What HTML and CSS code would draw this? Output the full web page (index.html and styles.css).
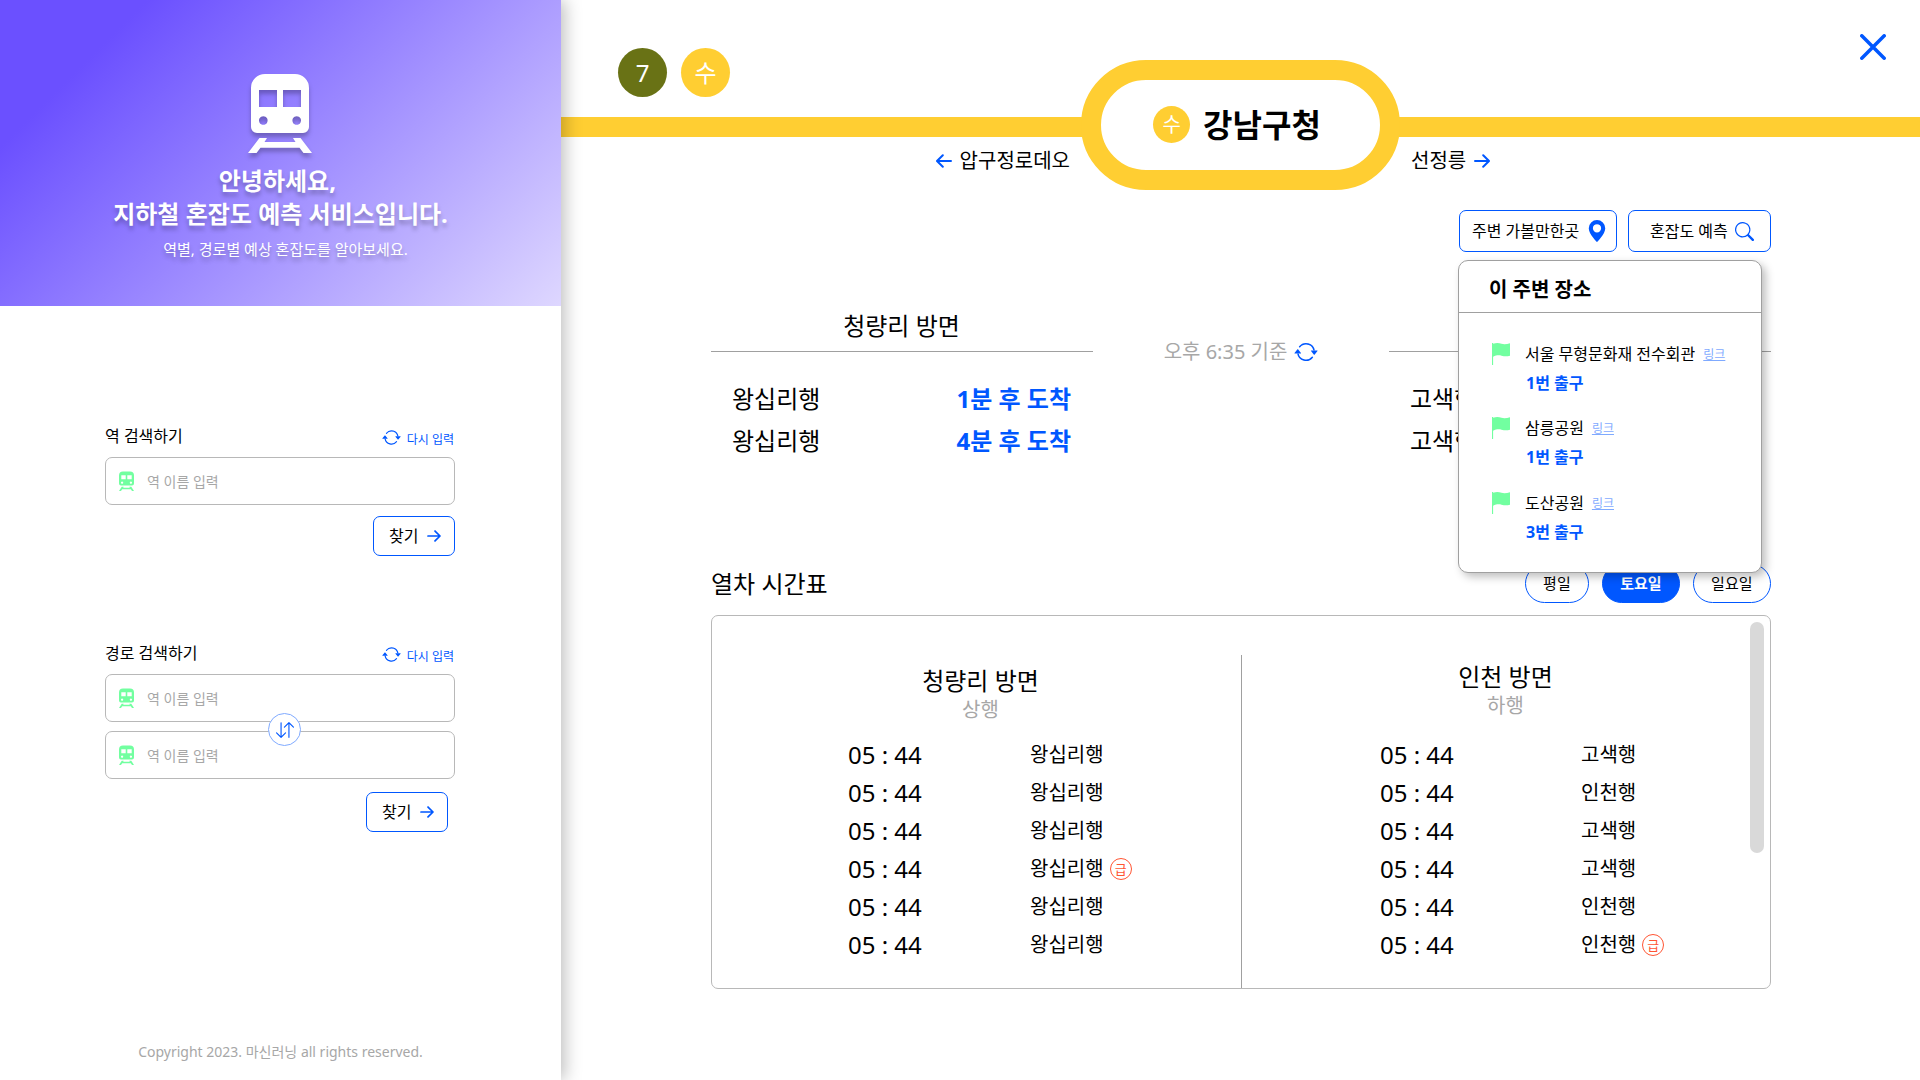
FILE: index.html
```html
<!DOCTYPE html>
<html lang="ko">
<head>
<meta charset="utf-8">
<title>지하철 혼잡도 예측 서비스</title>
<link rel="stylesheet" href="styles.css">
</head>
<body>
<svg class="sprite" aria-hidden="true">
  <symbol id="refresh" viewBox="0 0 16 16"><path d="M11.534 7h3.932a.25.25 0 0 1 .192.41l-1.966 2.36a.25.25 0 0 1-.384 0l-1.966-2.36a.25.25 0 0 1 .192-.41m-11 2h3.932a.25.25 0 0 0 .192-.41L2.692 6.23a.25.25 0 0 0-.384 0L.342 8.59A.25.25 0 0 0 .534 9"/><path d="M8 3c-1.552 0-2.94.707-3.857 1.818a.5.5 0 1 1-.771-.636A6.002 6.002 0 0 1 13.917 7H12.9A5 5 0 0 0 8 3M3.1 9a5.002 5.002 0 0 0 8.757 2.182.5.5 0 1 1 .771.636A6.002 6.002 0 0 1 2.083 9z"/></symbol>
  <symbol id="swap" viewBox="0 0 16 16"><path d="M11.5 15a.5.5 0 0 0 .5-.5V2.707l3.146 3.147a.5.5 0 0 0 .708-.708l-4-4a.5.5 0 0 0-.708 0l-4 4a.5.5 0 1 0 .708.708L11 2.707V14.5a.5.5 0 0 0 .5.5m-7-14a.5.5 0 0 1 .5.5v11.793l3.146-3.147a.5.5 0 0 1 .708.708l-4 4a.5.5 0 0 1-.708 0l-4-4a.5.5 0 0 1 .708-.708L4 13.293V1.5a.5.5 0 0 1 .5-.5"/></symbol>
  <symbol id="search" viewBox="0 0 16 16"><path d="M11.742 10.344a6.5 6.5 0 1 0-1.397 1.398h-.001q.044.06.098.115l3.85 3.85a1 1 0 0 0 1.415-1.414l-3.85-3.85a1 1 0 0 0-.115-.1zM12 6.5a5.5 5.5 0 1 1-11 0 5.5 5.5 0 0 1 11 0"/></symbol>
  <symbol id="pin" viewBox="0 0 16 16"><path d="M8 16s6-5.686 6-10A6 6 0 0 0 2 6c0 4.314 6 10 6 10m0-7a3 3 0 1 1 0-6 3 3 0 0 1 0 6"/></symbol>
  <symbol id="flag" viewBox="0 0 18 22"><path d="M0 0h1.1v.7C4.500-.2 7 0 9.500.8 12.500 1.700 15 1 18 .3V12.700C15 13.600 12.500 13.500 9.500 12.700 6.500 12 4 12.400 1.100 13.800V22H0z"/></symbol>
  <symbol id="arrow" viewBox="0 0 16 14"><path d="M1 7h13.500M9.200 1.200 15 7l-5.800 5.800" fill="none" stroke="currentColor" stroke-width="2" stroke-linecap="round" stroke-linejoin="round"/></symbol>
  <symbol id="train" viewBox="0 0 15 21"><path fill-rule="evenodd" d="M4 .5h7a4 4 0 0 1 4 4v8a2 2 0 0 1-2 2H2a2 2 0 0 1-2-2v-8a4 4 0 0 1 4-4zM2.300 4.300v4h4.400v-4zm6 0v4h4.400v-4zM3.100 10.500a1.100 1.100 0 1 0 .01 0zm8.800 0a1.100 1.100 0 1 0 .01 0z"/><path d="M2.700 15.800h2l-.5 1h6.600l-.5-1h2L15 20h-2l-1.200-1.700H3.200L2 20H0z"/></symbol>
</svg>

<div class="app">
  <aside class="sidebar">
    <section class="hero">
      <svg class="hero-train" width="64" height="80" viewBox="0 0 64 80"><path fill-rule="evenodd" d="M17 1h30a14 14 0 0 1 14 14v39a6 6 0 0 1-6 6H9a6 6 0 0 1-6-6V15A14 14 0 0 1 17 1zM11 17v17h18V17zm24 0v17h18V17zM15.300 43.200a4.300 4.300 0 1 0 .01 0zm33.400 0a4.300 4.300 0 1 0 .01 0z"/><path d="M11.500 65h7.500l-2.500 4h31l-2.500-4h7.500L64 80h-8.500l-4-5.300h-39l-4 5.300H0z"/></svg>
      <h1>안녕하세요,&nbsp;<br>지하철 혼잡도 예측 서비스입니다.</h1>
      <p>역별, 경로별 예상 혼잡도를 알아보세요.</p>
    </section>

    <section class="search station-search">
      <div class="search-head"><h2>역 검색하기</h2><a class="reset"><svg width="19" height="19"><use href="#refresh"/></svg><span>다시 입력</span></a></div>
      <div class="field"><svg width="15" height="21"><use href="#train"/></svg><span>역 이름 입력</span></div>
      <a class="find">찾기<svg width="14" height="12"><use href="#arrow"/></svg></a>
    </section>

    <section class="search route-search">
      <div class="search-head"><h2>경로 검색하기</h2><a class="reset"><svg width="19" height="19"><use href="#refresh"/></svg><span>다시 입력</span></a></div>
      <div class="fields">
        <div class="field"><svg width="15" height="21"><use href="#train"/></svg><span>역 이름 입력</span></div>
        <div class="field"><svg width="15" height="21"><use href="#train"/></svg><span>역 이름 입력</span></div>
        <span class="swap"><svg width="18" height="18"><use href="#swap"/></svg></span>
      </div>
      <a class="find">찾기<svg width="14" height="12"><use href="#arrow"/></svg></a>
    </section>

    <footer>Copyright 2023. 마신러닝 all rights reserved.</footer>
  </aside>

  <main class="main">
    <header class="top">
      <div class="lines"><span class="line line-7">7</span><span class="line">수</span></div>
      <svg class="close" width="26" height="26" viewBox="0 0 26 26"><path d="M1.800 1.800l22.400 22.400M24.200 1.800 1.800 24.200"/></svg>
    </header>
    <div class="track"><div class="station"><span>수</span><h2>강남구청</h2></div></div>
    <nav class="neighbors">
      <a class="prev"><svg width="16" height="14"><use href="#arrow"/></svg>압구정로데오</a>
      <a class="next">선정릉<svg width="16" height="14"><use href="#arrow"/></svg></a>
    </nav>

    <div class="content">
      <div class="actions">
        <div class="places">
          <a class="action action-places">주변 가볼만한곳<svg width="22" height="22"><use href="#pin"/></svg></a>
          <div class="popup">
            <h3>이 주변 장소</h3>
            <ul>
              <li><svg width="18" height="22"><use href="#flag"/></svg><div><p>서울 무형문화재 전수회관<a>링크</a></p><b>1번 출구</b></div></li>
              <li><svg width="18" height="22"><use href="#flag"/></svg><div><p>삼릉공원<a>링크</a></p><b>1번 출구</b></div></li>
              <li><svg width="18" height="22"><use href="#flag"/></svg><div><p>도산공원<a>링크</a></p><b>3번 출구</b></div></li>
            </ul>
          </div>
        </div>
        <a class="action action-forecast">혼잡도 예측<svg width="19" height="19"><use href="#search"/></svg></a>
      </div>

      <section class="arrivals">
        <div class="direction">
          <h3>청량리 방면</h3>
          <p>왕십리행<b>1분 후 도착</b></p>
          <p>왕십리행<b>4분 후 도착</b></p>
        </div>
        <div class="asof">오후 6:35 기준<svg width="24" height="24"><use href="#refresh"/></svg></div>
        <div class="direction">
          <h3>인천 방면</h3>
          <p>고색행<b>1분 후 도착</b></p>
          <p>고색행<b>4분 후 도착</b></p>
        </div>
      </section>

      <div class="table-head">
        <h2>열차 시간표</h2>
        <div class="tabs"><a>평일</a><a class="active">토요일</a><a>일요일</a></div>
      </div>
      <section class="timetable">
        <div class="up">
          <h3>청량리 방면</h3><h4>상행</h4>
          <dl>
            <dt>05 : 44</dt><dd>왕십리행</dd>
            <dt>05 : 44</dt><dd>왕십리행</dd>
            <dt>05 : 44</dt><dd>왕십리행</dd>
            <dt>05 : 44</dt><dd>왕십리행<i>급</i></dd>
            <dt>05 : 44</dt><dd>왕십리행</dd>
            <dt>05 : 44</dt><dd>왕십리행</dd>
          </dl>
        </div>
        <div class="down">
          <h3>인천 방면</h3><h4>하행</h4>
          <dl>
            <dt>05 : 44</dt><dd>고색행</dd>
            <dt>05 : 44</dt><dd>인천행</dd>
            <dt>05 : 44</dt><dd>고색행</dd>
            <dt>05 : 44</dt><dd>고색행</dd>
            <dt>05 : 44</dt><dd>인천행</dd>
            <dt>05 : 44</dt><dd>인천행<i>급</i></dd>
          </dl>
        </div>
        <span class="scrollbar"></span>
      </section>
    </div>
  </main>
</div>
</body>
</html>
```
FILE: styles.css
```css
:root {
  --blue: #0057ff;
  --yellow: #ffce32;
  --gray: #a7a7a7;
  --green: #72ffa0;
}

* { box-sizing: border-box; margin: 0; padding: 0; }

body {
  font-family: "Noto Sans", "Noto Sans CJK KR", sans-serif;
  font-size: 16px;
  line-height: 24px;
  color: #000;
  background: #fff;
}

h1, h2, h3, h4 { font-weight: 400; }
svg { flex: none; display: block; fill: currentColor; }
.sprite { position: absolute; width: 0; height: 0; }
ul { list-style: none; }

.app { display: flex; height: 1080px; overflow: hidden; }

/* Sidebar */
.sidebar {
  position: relative;
  z-index: 1;
  flex: none;
  width: 561px;
  height: 1080px;
  display: flex;
  flex-direction: column;
  background: #fff;
  box-shadow: 4px 0 16px rgba(0, 0, 0, .25);
}
.hero {
  height: 306px;
  padding-top: 73px;
  display: flex;
  flex-direction: column;
  align-items: center;
  color: #fff;
  text-align: center;
  background: linear-gradient(135deg, #6b50ff 17%, #ded7ff 100%);
}
.hero-train { margin-right: 1px; filter: drop-shadow(0 4px 2px rgba(0, 0, 0, .25)); }
.hero h1 {
  margin-top: 11px;
  font-size: 24px;
  font-weight: 700;
  line-height: 33px;
  text-shadow: 0 4px 4px rgba(0, 0, 0, .25);
}
.hero p {
  margin: 9px 0 0 10px;
  font-size: 15px;
  line-height: 20px;
  text-shadow: 0 4px 4px rgba(0, 0, 0, .25);
}

.search { width: 350px; margin-left: 105px; display: flex; flex-direction: column; }
.station-search { margin-top: 118px; }
.route-search { margin-top: 85px; }
.search-head { display: flex; justify-content: space-between; height: 33px; }
.search-head h2 { font-size: 16px; }
.reset {
  display: flex;
  align-items: center;
  gap: 6px;
  height: 28px;
  padding-right: 1px;
  font-size: 12px;
  color: var(--blue);
}
.reset span { padding-top: 3px; }
.reset svg { margin-top: -1px; }
.field {
  height: 48px;
  padding-left: 13px;
  display: flex;
  align-items: center;
  gap: 13px;
  border: 1px solid #b8b8b8;
  border-radius: 7px;
  font-size: 14px;
  color: var(--gray);
}
.field span { padding-top: 1px; }
.field svg { color: var(--green); }
.fields { position: relative; display: flex; flex-direction: column; gap: 9px; }
.swap {
  position: absolute;
  left: 163px;
  top: 39px;
  width: 33px;
  height: 33px;
  display: flex;
  align-items: center;
  justify-content: center;
  border: 1px solid #7faaff;
  border-radius: 50%;
  background: #fff;
  color: var(--blue);
}
.find {
  align-self: flex-end;
  width: 82px;
  height: 40px;
  margin-top: 11px;
  padding-left: 15px;
  display: flex;
  align-items: center;
  gap: 8.500px;
  border: 1px solid var(--blue);
  border-radius: 7px;
}
.find svg { color: var(--blue); }
.route-search .find { margin: 13px 7px 0 0; }
footer {
  margin-top: auto;
  padding-bottom: 16px;
  font-size: 14px;
  text-align: center;
  color: var(--gray);
}

/* Station header */
.main { flex: 1; display: flex; flex-direction: column; }
.top {
  height: 117px;
  padding: 34px 34px 0 57px;
  display: flex;
  justify-content: space-between;
}
.lines { display: flex; gap: 14px; padding-top: 14px; }
.line {
  width: 49px;
  height: 49px;
  border-radius: 50%;
  font-size: 24px;
  line-height: 49px;
  text-align: center;
  color: #fff;
  background: var(--yellow);
}
.line-7 { background: #697215; }
.close { fill: none; stroke: var(--blue); stroke-width: 3.5; stroke-linecap: round; }
.track {
  height: 20px;
  display: flex;
  align-items: center;
  justify-content: center;
  background: var(--yellow);
}
.station {
  flex: none;
  width: 319px;
  height: 130px;
  margin-top: -4px;
  display: flex;
  align-items: center;
  justify-content: center;
  gap: 13px;
  border: 20px solid var(--yellow);
  border-radius: 65px;
  background: #fff;
}
.station span {
  width: 37px;
  height: 37px;
  margin: -1px 0 0 -7px;
  border-radius: 50%;
  font-size: 20px;
  line-height: 37px;
  text-align: center;
  color: #fff;
  background: var(--yellow);
}
.station h2 { font-size: 32px; font-weight: 700; line-height: 44px; }
.neighbors {
  height: 48px;
  display: grid;
  grid-template-columns: 1fr 341px 1fr;
  align-items: center;
  font-size: 20px;
}
.neighbors a { display: flex; align-items: center; gap: 8px; }
.neighbors svg { color: var(--blue); }
.prev { justify-content: flex-end; }
.prev svg { transform: scaleX(-1); }
.next { grid-column: 3; }

.content { width: 1060px; margin: 25px 0 0 150px; }
.actions { display: flex; justify-content: flex-end; gap: 11px; }
.action {
  height: 42px;
  display: flex;
  align-items: center;
  border: 1px solid var(--blue);
  border-radius: 7px;
}
.action svg { color: var(--blue); }
.action-places { width: 158px; padding-left: 12px; gap: 7px; }
.action-forecast { width: 143px; padding-left: 21px; gap: 7px; }
.places { position: relative; }
.popup {
  position: absolute;
  z-index: 2;
  top: 50px;
  left: -1px;
  width: 304px;
  height: 313px;
  border: 1px solid #a0a0a0;
  border-radius: 10px;
  background: #fff;
  box-shadow: 4px 4px 8px rgba(0, 0, 0, .25);
}
.popup h3 {
  height: 52px;
  padding-left: 30px;
  border-bottom: 1px solid #a0a0a0;
  font-size: 20px;
  font-weight: 700;
  line-height: 57px;
}
.popup ul { padding: 30px 0 0 33px; }
.popup li { display: flex; gap: 15px; height: 75px; }
.popup li:first-child { height: 74px; }
.popup li svg { color: var(--green); }
.popup li p { display: flex; margin-top: -1px; }
.popup li a {
  margin-left: 8px;
  font-size: 12px;
  line-height: 26px;
  color: #7faaff;
  text-decoration: underline;
}
.popup li b { display: block; padding-left: 1px; line-height: 30px; color: var(--blue); }

/* Live arrivals */
.arrivals { margin-top: 54px; display: grid; grid-template-columns: 382px 1fr 382px; }
.direction { font-size: 24px; }
.direction h3 {
  height: 46px;
  margin-bottom: 26px;
  padding-right: 1px;
  border-bottom: 1px solid #a0a0a0;
  font-size: 24px;
  line-height: 40px;
  text-align: center;
}
.direction p {
  display: flex;
  justify-content: space-between;
  padding: 0 22px 0 21px;
  line-height: 42px;
}
.direction b { color: var(--blue); }
.asof {
  padding-top: 32px;
  height: 60px;
  display: flex;
  align-items: center;
  justify-content: center;
  gap: 7px;
  font-size: 20px;
  color: var(--gray);
}
.asof svg { color: var(--blue); }

/* Timetable */
.table-head {
  margin-top: 102px;
  height: 39px;
  display: flex;
  align-items: center;
  justify-content: space-between;
}
.table-head h2 { font-size: 24px; }
.tabs { display: flex; gap: 13px; }
.tabs a {
  height: 39px;
  padding: 0 17.500px 0 17px;
  border: 1px solid var(--blue);
  border-radius: 20px;
  font-size: 15px;
  line-height: 37px;
}
.tabs .active { font-weight: 700; color: #fff; background: var(--blue); }
.timetable {
  position: relative;
  height: 374px;
  margin-top: 12px;
  padding-top: 39px;
  display: grid;
  grid-template-columns: 530px 1fr;
  border: 1px solid #b8b8b8;
  border-radius: 7px;
}
.timetable h3 { font-size: 24px; line-height: 32px; text-align: center; }
.timetable h4 { font-size: 20px; line-height: 26px; text-align: center; color: var(--gray); }
.up { padding-top: 10px; border-right: 1px solid #a0a0a0; }
.up h3, .up h4 { padding-left: 8px; }
.down { padding-top: 6px; }
.down h3, .down h4 { padding-right: 1px; }
.timetable dl { display: grid; grid-auto-rows: 38px; line-height: 38px; }
.up dl { margin: 13px 0 0 136px; grid-template-columns: 182px 1fr; }
.down dl { margin: 17px 0 0 138px; grid-template-columns: 201px 1fr; }
.timetable dt { font-size: 24px; }
.timetable dd { display: flex; align-items: center; gap: 6px; font-size: 20px; }
.timetable i {
  width: 22px;
  height: 22px;
  border: 1px solid #ff5533;
  border-radius: 50%;
  font-size: 13px;
  font-style: normal;
  line-height: 20px;
  text-align: center;
  color: #ff5533;
}
.scrollbar {
  position: absolute;
  top: 6px;
  right: 6px;
  width: 14px;
  height: 231px;
  border-radius: 7px;
  background: #d9d9d9;
}
```
